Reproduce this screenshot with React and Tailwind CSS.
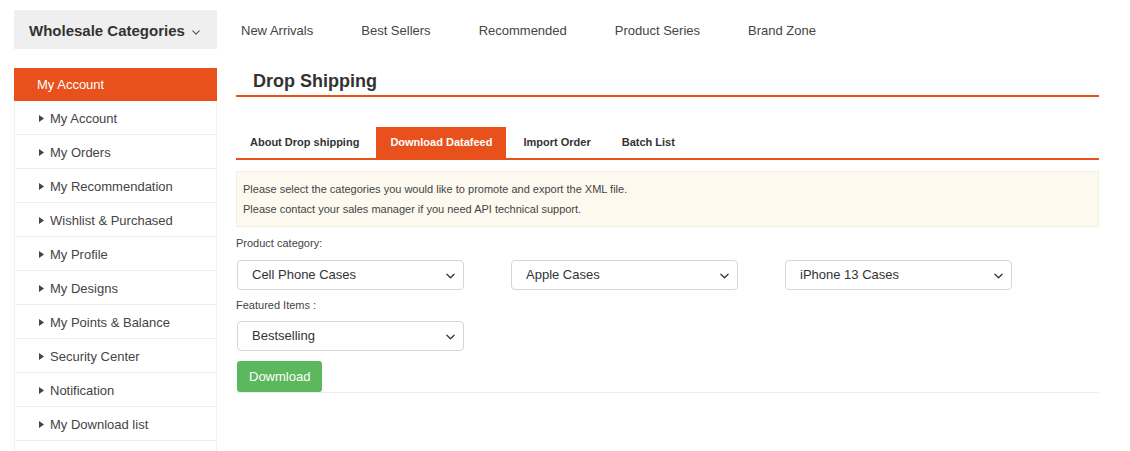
import React from 'react';

const navLinks = ['New Arrivals', 'Best Sellers', 'Recommended', 'Product Series', 'Brand Zone'];

const accountLinks = [
  'My Account',
  'My Orders',
  'My Recommendation',
  'Wishlist & Purchased',
  'My Profile',
  'My Designs',
  'My Points & Balance',
  'Security Center',
  'Notification',
  'My Download list',
];

const tabs = ['About Drop shipping', 'Download Datafeed', 'Import Order', 'Batch List'];

function Chevron({ className }) {
  return (
    <svg className={className} viewBox="0 0 10 6" fill="none" stroke="currentColor" strokeWidth="1.4" strokeLinecap="round" strokeLinejoin="round">
      <path d="M1 1l4 4 4-4" />
    </svg>
  );
}

function Select({ value }) {
  return (
    <div className="relative w-[227px]">
      <select
        defaultValue={value}
        className="w-full h-[30px] appearance-none bg-white border border-[#d6d6d6] rounded-[4px] pl-[14px] pr-8 text-[13px] text-[#333] outline-none"
      >
        <option>{value}</option>
      </select>
      <Chevron className="pointer-events-none absolute right-[9px] top-[13px] w-[9px] h-[6px] text-[#333]" />
    </div>
  );
}

export default function App() {
  return (
    <div className="w-[1130px] h-[451px] overflow-hidden bg-white pl-[14px] pt-[10px] text-[#333]" style={{ fontFamily: '"Liberation Sans", Arial, sans-serif' }}>
      {/* Header */}
      <div className="flex items-center h-[39px]">
        <div className="w-[203px] h-full bg-[#efefef] flex items-center pl-[15px] pt-[3px] gap-[7px]">
          <span className="text-[15px] font-bold text-[#333]">Wholesale Categories</span>
          <Chevron className="w-[8px] h-[5px] text-[#555] mt-[2px]" />
        </div>
        <nav className="flex gap-[48px] pl-[24px] pt-[3px] text-[13px] text-[#444]">
          {navLinks.map((l) => (
            <span key={l}>{l}</span>
          ))}
        </nav>
      </div>

      <div className="flex mt-[19px] gap-[19px]">
        {/* Sidebar */}
        <aside className="w-[203px] shrink-0">
          <div className="h-[33px] bg-[#e8511c] text-white text-[13px] flex items-center pl-[23px] pt-px">My Account</div>
          <ul className="border-x border-[#f0f0f0]">
            {accountLinks.map((l) => (
              <li key={l} className="h-[34px] border-b border-[#eeeeee] flex items-center pl-[24px] pt-[2px] text-[13px] text-[#444]">
                <svg className="w-[5px] h-[7px] mr-[6px] text-[#444]" viewBox="0 0 5 7" fill="currentColor">
                  <path d="M0 0l5 3.5L0 7z" />
                </svg>
                {l}
              </li>
            ))}
            <li className="h-[34px]" />
          </ul>
        </aside>

        {/* Main */}
        <main className="w-[863px]">
          <div className="h-[29px] border-b-2 border-[#e8511c] pl-[17px] flex items-start">
            <h1 className="text-[18px] font-bold text-[#333] leading-[26px]">Drop Shipping</h1>
          </div>

          <div className="mt-[30px] flex border-b-2 border-[#e8511c] gap-[3px]">
            {tabs.map((t, i) => (
              <div
                key={t}
                className={
                  i === 1
                    ? 'h-[31px] px-[14px] flex items-center text-[11px] font-bold bg-[#e8511c] text-white'
                    : 'h-[31px] px-[14px] flex items-center text-[11px] font-bold text-[#333]'
                }
              >
                {t}
              </div>
            ))}
          </div>

          <div className="mt-[11px] h-[56px] bg-[#fdf9ef] border border-[#f5efe0] px-[6px] pt-[7px] text-[11px] leading-[20px] text-[#444]">
            <p>Please select the categories you would like to promote and export the XML file.</p>
            <p>Please contact your sales manager if you need API technical support.</p>
          </div>

          <div className="border-b border-[#eeeeee]">
            <div className="mt-[8px] text-[11px] text-[#444] leading-[16px]">Product category:</div>
            <div className="mt-[9px] flex gap-[47px] pl-px">
              <Select value="Cell Phone Cases" />
              <Select value="Apple Cases" />
              <Select value="iPhone 13 Cases" />
            </div>
            <div className="mt-[7px] text-[11px] text-[#444] leading-[16px]">Featured Items :</div>
            <div className="mt-[8px] pl-px">
              <Select value="Bestselling" />
            </div>
            <button className="mt-[10px] ml-px h-[31px] px-[12px] bg-[#5cb85c] rounded-[3px] text-white text-[13px] block">
              Dowmload
            </button>
          </div>
        </main>
      </div>
    </div>
  );
}
